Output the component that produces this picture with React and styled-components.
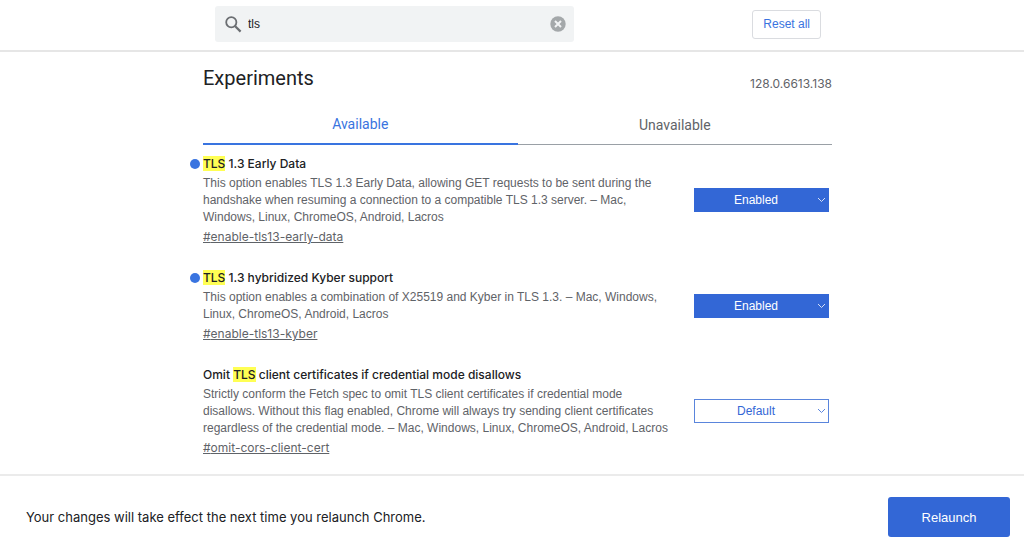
import React, { useState } from 'react';
import styled, { createGlobalStyle } from 'styled-components';

const GlobalStyle = createGlobalStyle`
  * {
    box-sizing: border-box;
  }

  body {
    margin: 0;
    background: #fff;
    color: #202124;
    font-family: Inter, Roboto, sans-serif;
    font-size: 12px;
  }
`;

const Page = styled.div`
  display: flex;
  flex-direction: column;
  height: 100vh;
`;

const Header = styled.header`
  flex: none;
  padding: 6px 0 8px;
  border-bottom: 2px solid #e6e6e6;
`;

const HeaderContent = styled.div`
  display: flex;
  align-items: center;
  justify-content: space-between;
  max-width: 640px;
  margin: 0 auto;
  padding: 0 11px 0 23px;
`;

const SearchBox = styled.div`
  display: flex;
  align-items: center;
  flex: 0 1 359px;
  height: 36px;
  padding: 0 8px 0 9px;
  border-radius: 3px;
  background: #f1f3f4;
`;

const SearchInput = styled.input`
  flex: 1;
  min-width: 0;
  padding: 0 5px;
  border: none;
  outline: none;
  background: transparent;
  color: #202124;
  font-family: "Liberation Sans", Arial, sans-serif;
  font-size: 12px;
`;

const ClearButton = styled.button`
  display: flex;
  padding: 0;
  border: none;
  background: none;
`;

const ResetButton = styled.button`
  height: 29px;
  padding: 0 10px;
  border: 1px solid #dadce0;
  border-radius: 3px;
  background: #fff;
  color: #3974e0;
  font-family: "Liberation Sans", Arial, sans-serif;
  font-size: 12px;
`;

const Main = styled.main`
  flex: 1;
  min-height: 0;
  overflow-y: auto;
`;

const Content = styled.div`
  max-width: 640px;
  margin: 0 auto;
  padding: 12px 0 0 11px;
`;

const TitleRow = styled.div`
  display: flex;
  justify-content: space-between;
  align-items: flex-end;
`;

const PageTitle = styled.h1`
  margin: 0;
  font-family: Roboto, sans-serif;
  font-size: 20px;
  font-weight: 400;
  line-height: 28px;
`;

const Version = styled.span`
  color: #5f6368;
  font-size: 12px;
  line-height: 16px;
`;

const Tabs = styled.div`
  display: flex;
  margin-top: 13px;
`;

const Tab = styled.button`
  flex: 1;
  height: 40px;
  padding: 0;
  border: none;
  border-bottom: ${props => (props.$selected ? '2px solid #3974e0' : '1px solid #9aa0a6')};
  background: none;
  color: ${props => (props.$selected ? '#3974e0' : '#5f6368')};
  font-family: Roboto, sans-serif;
  font-size: 14px;
`;

const FlagList = styled.div`
  display: flex;
  flex-direction: column;
  gap: 24px;
  padding-top: 10px;
`;

const FlagRow = styled.section`
  display: flex;
  align-items: center;
  gap: 18px;
  padding-right: 3px;
`;

const FlagText = styled.div`
  flex: 1;
`;

const FlagName = styled.h2`
  display: flex;
  align-items: center;
  margin: 0;
  font-size: 12px;
  font-weight: 500;
  line-height: 18px;
`;

const ChangedDot = styled.span`
  width: 10px;
  height: 10px;
  margin: 0 3px 0 -13px;
  border-radius: 50%;
  background: #3974e0;
`;

const Highlight = styled.mark`
  background: #ffff54;
  color: inherit;
`;

const Description = styled.p`
  margin: 2px 0;
  color: #5f6368;
  font-family: "Liberation Sans", Arial, sans-serif;
  line-height: 17px;
`;

const Permalink = styled.a`
  display: block;
  color: #5f6368;
  line-height: 17px;
`;

const SelectWrapper = styled.div`
  position: relative;
  flex: none;
  width: 135px;
  color: ${props => (props.$changed ? '#fff' : '#3367d6')};
`;

const FlagSelect = styled.select`
  display: block;
  width: 100%;
  height: 24px;
  padding: 0 11px 0 0;
  appearance: none;
  border: 1px solid ${props => (props.$changed ? '#3367d6' : '#5a85dc')};
  border-radius: 0;
  background: ${props => (props.$changed ? '#3367d6' : '#fff')};
  color: inherit;
  font-family: "Liberation Sans", Arial, sans-serif;
  font-size: 12px;
  text-align: center;
  text-align-last: center;
`;

const Chevron = styled.svg`
  position: absolute;
  top: 9px;
  right: 3px;
  opacity: 0.8;
  pointer-events: none;
`;

const Footer = styled.footer`
  display: flex;
  flex: none;
  align-items: center;
  justify-content: space-between;
  padding: 21px 14px 15px 26px;
  border-top: 2px solid #ebebeb;
  font-size: 13px;
`;

const RelaunchButton = styled.button`
  width: 122px;
  height: 40px;
  border: none;
  border-radius: 3px;
  background: #3367d6;
  color: #fff;
  font-family: "Liberation Sans", Arial, sans-serif;
  font-size: 13px;
`;

const flags = [
  {
    id: 'enable-tls13-early-data',
    name: 'TLS 1.3 Early Data',
    description: 'This option enables TLS 1.3 Early Data, allowing GET requests to be sent during the handshake when resuming a connection to a compatible TLS 1.3 server. – Mac, Windows, Linux, ChromeOS, Android, Lacros',
    value: 'Enabled',
  },
  {
    id: 'enable-tls13-kyber',
    name: 'TLS 1.3 hybridized Kyber support',
    description: 'This option enables a combination of X25519 and Kyber in TLS 1.3. – Mac, Windows, Linux, ChromeOS, Android, Lacros',
    value: 'Enabled',
  },
  {
    id: 'omit-cors-client-cert',
    name: 'Omit TLS client certificates if credential mode disallows',
    description: 'Strictly conform the Fetch spec to omit TLS client certificates if credential mode disallows. Without this flag enabled, Chrome will always try sending client certificates regardless of the credential mode. – Mac, Windows, Linux, ChromeOS, Android, Lacros',
    value: 'Default',
  },
];

const highlight = (text, query) => {
  const start = query ? text.toLowerCase().indexOf(query.toLowerCase()) : -1;
  if (start < 0) return text;
  const end = start + query.length;
  return (
    <>
      {text.slice(0, start)}
      <Highlight>{text.slice(start, end)}</Highlight>
      {text.slice(end)}
    </>
  );
};

const Flag = ({ flag, query }) => {
  const [value, setValue] = useState(flag.value);
  const changed = value !== 'Default';

  return (
    <FlagRow id={flag.id}>
      <FlagText>
        <FlagName>
          {changed && <ChangedDot />}
          <label htmlFor={`${flag.id}-select`}>{highlight(flag.name, query)}</label>
        </FlagName>
        <Description>{flag.description}</Description>
        <Permalink href={`#${flag.id}`}>#{flag.id}</Permalink>
      </FlagText>
      <SelectWrapper $changed={changed}>
        <FlagSelect
          id={`${flag.id}-select`}
          $changed={changed}
          value={value}
          onChange={e => setValue(e.target.value)}
        >
          <option>Default</option>
          <option>Enabled</option>
          <option>Disabled</option>
        </FlagSelect>
        <Chevron width="9" height="6" viewBox="0 0 9 6" fill="none" stroke="currentColor">
          <path d="M1 1l3.5 3.5L8 1" />
        </Chevron>
      </SelectWrapper>
    </FlagRow>
  );
};

const App = () => {
  const [query, setQuery] = useState('tls');
  const [tab, setTab] = useState('Available');

  return (
    <Page>
      <GlobalStyle />
      <Header>
        <HeaderContent>
          <SearchBox>
            <svg width="19" height="19" viewBox="0 0 19 19" fill="none" stroke="#6b6e72" strokeWidth="1.8">
              <circle cx="7.3" cy="7.3" r="5.1" />
              <path d="M11.2 11.2l5.4 5.4" strokeWidth="2.2" />
            </svg>
            <SearchInput
              type="text"
              aria-label="Search flags"
              value={query}
              onChange={e => setQuery(e.target.value)}
            />
            <ClearButton aria-label="Clear search" onClick={() => setQuery('')}>
              <svg width="16" height="16" viewBox="0 0 16 16">
                <circle cx="8" cy="8" r="7.7" fill="#a4a8aa" />
                <path d="M5 5l6 6M11 5l-6 6" stroke="#f1f3f4" strokeWidth="2" />
              </svg>
            </ClearButton>
          </SearchBox>
          <ResetButton>Reset all</ResetButton>
        </HeaderContent>
      </Header>
      <Main>
        <Content>
          <TitleRow>
            <PageTitle>Experiments</PageTitle>
            <Version>128.0.6613.138</Version>
          </TitleRow>
          <Tabs role="tablist">
            {['Available', 'Unavailable'].map(name => (
              <Tab
                key={name}
                role="tab"
                aria-selected={tab === name}
                $selected={tab === name}
                onClick={() => setTab(name)}
              >
                {name}
              </Tab>
            ))}
          </Tabs>
          <FlagList>
            {flags.map(flag => <Flag key={flag.id} flag={flag} query={query} />)}
          </FlagList>
        </Content>
      </Main>
      <Footer>
        <span>Your changes will take effect the next time you relaunch Chrome.</span>
        <RelaunchButton>Relaunch</RelaunchButton>
      </Footer>
    </Page>
  );
};

export default App;
